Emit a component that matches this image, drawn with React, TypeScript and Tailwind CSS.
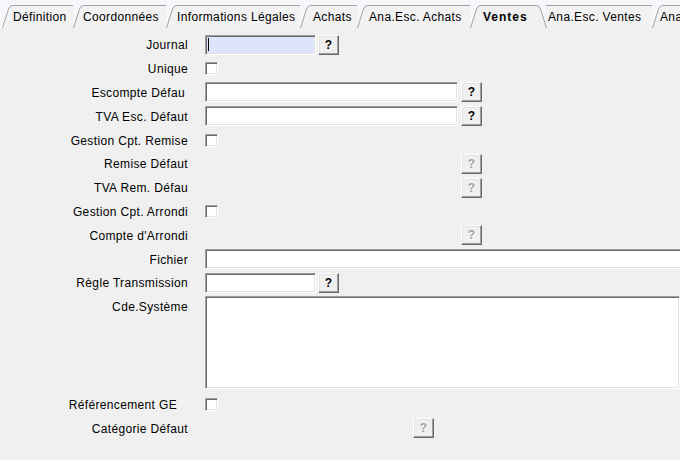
const font = { fontFamily: '"Liberation Sans", Arial, sans-serif' };

interface TabProps {
  label: string;
  w: number;
  className: string;
  active?: boolean;
  noSlant?: boolean;
}

function Tab({ label, w, className, active, noSlant }: TabProps) {
  let d = noSlant ? `M0 0.5 H${w}` : `M0.5 23 L6.5 4 Q7.5 0.5 11 0.5 H${w}`;
  if (active) d = `M0.5 23 L6.5 4 Q7.5 0.5 11 0.5 H${w - 11} Q${w - 7.5} 0.5 ${w - 6.5} 4 L${w - 0.5} 23`;
  return (
    <div className={`relative h-[23px] shrink-0 ${className} ${active ? "z-10" : ""}`}>
      <svg className="absolute left-0 top-0" width={w} height={23}>
        <path d={d + (active ? " Z" : ` V23 H0 Z`)} fill={active ? "#f0f0f0" : "#f2f2f2"} stroke="none" />
        <path d={d} fill="none" stroke="#a3a3a3" strokeWidth="1" />
      </svg>
      <span
        className={`relative block whitespace-nowrap pt-[5px] text-[12px] leading-[14px] text-black ${active ? "font-bold tracking-[1px]" : "tracking-[0.35px]"}`}
      >
        {label}
      </span>
    </div>
  );
}

function Field({ w, focused }: { w: string; focused?: boolean }) {
  return (
    <div
      className={`relative h-[20px] ${w} border border-t-[#a0a0a0] border-l-[#a0a0a0] border-b-white border-r-white shadow-[inset_1px_1px_0_#696969,inset_-1px_-1px_0_#e3e3e3] ${focused ? "bg-[#dde5fd]" : "bg-white"}`}
    >
      {focused && <div className="absolute left-[2px] top-[2px] h-[13px] w-px bg-black" />}
    </div>
  );
}

function HelpButton({ disabled, className = "" }: { disabled?: boolean; className?: string }) {
  return (
    <div
      className={`flex h-[20px] w-[21px] items-center justify-center border border-t-white border-l-white border-b-[#696969] border-r-[#696969] bg-[#f0f0f0] shadow-[inset_-1px_-1px_0_#a0a0a0,inset_1px_1px_0_#e3e3e3] text-[12px] font-bold leading-none ${disabled ? "text-[#a0a0a0] [text-shadow:1px_1px_0_#ffffff]" : "text-black"} ${className}`}
    >
      ?
    </div>
  );
}

function Check() {
  return (
    <div className="h-[13px] w-[13px] border border-t-[#a0a0a0] border-l-[#a0a0a0] border-b-white border-r-white bg-white shadow-[inset_1px_1px_0_#696969,inset_-1px_-1px_0_#e3e3e3]" />
  );
}

function Row({ label, children, pr = "pr-[1px]" }: { label: string; children?: React.ReactNode; pr?: string }) {
  return (
    <div className="flex h-[23.8px] items-center">
      <div
        className={`w-[189px] shrink-0 whitespace-nowrap pt-[1px] text-right text-[12px] leading-[14px] tracking-[0.35px] text-black ${pr}`}
      >
        {label}
      </div>
      <div className="ml-4 flex items-center">{children}</div>
    </div>
  );
}

export default function App() {
  return (
    <div className="h-[460px] w-[680px] overflow-hidden bg-[#f0f0f0]" style={font}>
      <div className="flex h-[28px] items-end overflow-hidden bg-[#f5f7fa] pl-[2px]">
        <Tab label="Définition" w={71} className="w-[71px] pl-[11px]" />
        <Tab label="Coordonnées" w={93} className="w-[93px] pl-[10px]" />
        <Tab label="Informations Légales" w={134} className="w-[134px] pl-[11px]" />
        <Tab label="Achats" w={57} className="w-[57px] pl-[13px]" />
        <Tab label="Ana.Esc. Achats" w={113} className="w-[113px] pl-[12px]" />
        <Tab label="Ventes" w={77} className="w-[77px] pl-[13px]" active />
        <Tab label="Ana.Esc. Ventes" w={106} className="-ml-[1px] w-[106px] pl-[2px]" noSlant />
        <Tab label="Ana" w={40} className="w-[40px] pl-[8px]" />
      </div>

      <div className="pt-[5px]">
        <Row label="Journal">
          <Field w="w-[111px]" focused />
          <HelpButton className="ml-[2px]" />
        </Row>
        <Row label="Unique">
          <Check />
        </Row>
        <Row label="Escompte Défau" pr="pr-[4px]">
          <Field w="w-[253px]" />
          <HelpButton className="ml-[3px]" />
        </Row>
        <Row label="TVA Esc. Défaut">
          <Field w="w-[253px]" />
          <HelpButton className="ml-[3px]" />
        </Row>
        <Row label="Gestion Cpt. Remise">
          <Check />
        </Row>
        <Row label="Remise Défaut">
          <HelpButton disabled className="ml-[256px]" />
        </Row>
        <Row label="TVA Rem. Défau">
          <HelpButton disabled className="ml-[256px]" />
        </Row>
        <Row label="Gestion Cpt. Arrondi">
          <Check />
        </Row>
        <Row label="Compte d'Arrondi">
          <HelpButton disabled className="ml-[256px]" />
        </Row>
        <Row label="Fichier">
          <Field w="w-[490px]" />
        </Row>
        <Row label="Règle Transmission">
          <Field w="w-[111px]" />
          <HelpButton className="ml-[2px]" />
        </Row>

        <div className="flex items-start">
          <div className="flex h-[23.8px] w-[189px] shrink-0 items-center justify-end pr-[1px] pt-[1px] text-[12px] leading-[14px] tracking-[0.35px] text-black">
            Cde.Système
          </div>
          <div className="ml-4 mb-[4px] mt-[1px] h-[93px] w-[490px] border border-t-[#a0a0a0] border-l-[#a0a0a0] border-b-white border-r-white bg-white shadow-[inset_1px_1px_0_#696969,inset_-1px_-1px_0_#e3e3e3]" />
        </div>

        <Row label="Référencement GE" pr="pr-[12px]">
          <Check />
        </Row>
        <Row label="Catégorie Défaut">
          <HelpButton disabled className="ml-[208px]" />
        </Row>
      </div>
    </div>
  );
}
